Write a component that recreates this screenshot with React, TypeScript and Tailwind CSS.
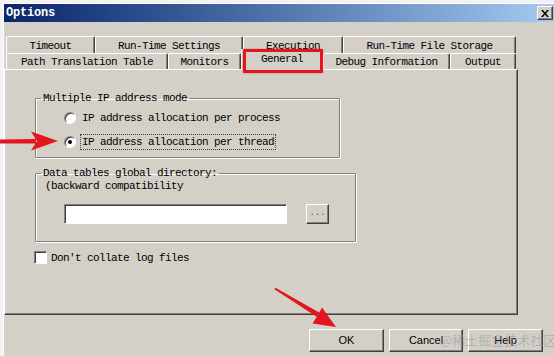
import clsx from 'clsx';

const MONO = "font-['Liberation_Mono',monospace] text-[11px] tracking-[-0.6px] leading-[12px] text-black";

interface TabInfo {
    label: string;
    width: string;
    active?: boolean;
}

const topRow: TabInfo[] = [
    { label: 'Timeout', width: 'w-[89px]' },
    { label: 'Run-Time Settings', width: 'w-[148px]' },
    { label: 'Execution', width: 'w-[100px]' },
    { label: 'Run-Time File Storage', width: 'w-[173px]' },
];

const bottomRow: TabInfo[] = [
    { label: 'Path Translation Table', width: 'w-[162px]' },
    { label: 'Monitors', width: 'w-[73px]' },
    { label: 'General', width: 'w-[82px]', active: true },
    { label: 'Debug Information', width: 'w-[127px]' },
    { label: 'Output', width: 'w-[66px]' },
];

function Tab({ tab }: { tab: TabInfo }) {
    if (tab.active) {
        return (
            <div className={clsx(tab.width, 'relative z-10 h-[21px] -mb-[1px] bg-[#d4d0c8] flex justify-center pt-[3px] rounded-t-[2px] border-t border-l border-r border-t-white border-l-white border-r-[#404040] shadow-[inset_-1px_0_0_#808080]', MONO)}>
                {tab.label}
                {/* marcação vermelha em volta da aba */}
                <div className="absolute left-[1px] -top-[1px] w-[80px] h-[24px] border-[3px] border-[#e3161d] rounded-[1px] shadow-[0_0_2px_rgba(200,0,0,0.5)]" />
            </div>
        );
    }
    return (
        <div className={clsx(tab.width, 'h-full flex items-center justify-center pt-[1px] rounded-t-[2px] border-t border-l border-r border-t-white border-l-white border-r-[#404040] shadow-[inset_-1px_0_0_#808080]', MONO)}>
            {tab.label}
        </div>
    );
}

function Radio({ checked }: { checked?: boolean }) {
    return (
        <div className="w-[12px] h-[12px] rounded-full bg-white border border-t-[#808080] border-l-[#808080] border-r-white border-b-white shadow-[inset_1px_1px_0_#404040] flex items-center justify-center">
            {checked && <div className="w-[4px] h-[4px] rounded-full bg-black" />}
        </div>
    );
}

function Button({ label, width }: { label: string; width: string }) {
    return (
        <button className={clsx(width, "h-[23px] bg-[#d4d0c8] border border-t-white border-l-white border-r-[#404040] border-b-[#404040] shadow-[inset_-1px_-1px_0_#808080] font-['Liberation_Sans',sans-serif] text-[11px] text-black flex items-center justify-center")}>
            {label}
        </button>
    );
}

export default function App() {
    return (
        <div className="relative w-[554px] h-[356px] overflow-hidden bg-[#f2f2f2] pt-[3px] pl-[3px]">
            <div className="h-full bg-[#d4d0c8] border-l border-t border-white">
                {/* barra de título */}
                <div className="h-[18px] flex items-center justify-between bg-gradient-to-r from-[#0a246a] to-[#a6caf0] pl-[2px] pr-[1px]">
                    <span className="font-['Liberation_Mono',monospace] text-[12px] font-bold tracking-[-0.2px] text-white">Options</span>
                    <div className="w-[16px] h-[14px] bg-[#d4d0c8] border border-t-white border-l-white border-r-[#404040] border-b-[#404040] shadow-[inset_-1px_-1px_0_#808080] flex items-center justify-center">
                        <svg width="8" height="7" viewBox="0 0 8 7">
                            <path d="M0 0h2l2 2.5L6 0h2L5 3.5 8 7H6L4 4.5 2 7H0l3-3.5z" fill="#000" />
                        </svg>
                    </div>
                </div>

                {/* abas */}
                <div className="mt-[14px] pl-[2px]">
                    <div className="flex h-[17px]">
                        {topRow.map(tab => <Tab key={tab.label} tab={tab} />)}
                    </div>
                    <div className="flex items-end h-[16px]">
                        {bottomRow.map(tab => <Tab key={tab.label} tab={tab} />)}
                    </div>
                </div>

                {/* painel */}
                <div className="w-[514px] h-[246px] border border-t-white border-l-white border-r-[#404040] border-b-[#404040] shadow-[inset_-1px_-1px_0_#808080] pl-[30px] pt-[22px]">
                    <fieldset className="w-[305px] border border-[#808080] shadow-[inset_1px_1px_0_#fff,1px_1px_0_#fff] rounded-[1px]">
                        <legend className={clsx('ml-[5px] px-[2px]', MONO)}>Multiple IP address mode</legend>
                        <div className="flex flex-col gap-[10px] pt-[7px] pb-[8px] pl-[28px]">
                            <div className="flex items-center h-[14px] gap-[5px]">
                                <Radio />
                                <span className={clsx(MONO, 'px-[1px]')}>IP address allocation per process</span>
                            </div>
                            <div className="flex items-center h-[14px] gap-[4px]">
                                <Radio checked />
                                <span className={clsx(MONO, 'px-[1px] py-[1px] border border-dotted border-[#404040]')}>IP address allocation per thread</span>
                            </div>
                        </div>
                    </fieldset>

                    <fieldset className="mt-[9px] w-[321px] border border-[#808080] shadow-[inset_1px_1px_0_#fff,1px_1px_0_#fff] rounded-[1px]">
                        <legend className={clsx('ml-[5px] px-[2px]', MONO)}>Data tables global directory:</legend>
                        <div className={clsx('pl-[9px] mt-[1px]', MONO)}>(backward compatibility</div>
                        <div className="flex items-center gap-[19px] pl-[28px] mt-[12px] pb-[17px]">
                            <div className="w-[223px] h-[20px] bg-white border border-t-[#808080] border-l-[#808080] border-r-white border-b-white shadow-[inset_1px_1px_0_#404040]" />
                            <div className={clsx('w-[23px] h-[20px] border border-t-white border-l-white border-r-[#404040] border-b-[#404040] shadow-[inset_-1px_-1px_0_#808080] flex items-center justify-center text-[#505050]', "font-['Liberation_Mono',monospace] text-[9px]")}>...</div>
                        </div>
                    </fieldset>

                    <div className="mt-[9px] -ml-[1px] flex items-center gap-[4px]">
                        <div className="w-[13px] h-[13px] bg-white border border-t-[#808080] border-l-[#808080] border-r-white border-b-white shadow-[inset_1px_1px_0_#404040]" />
                        <span className={MONO}>Don't collate log files</span>
                    </div>
                </div>

                {/* botões */}
                <div className="mt-[14px] flex justify-end gap-[5px] pr-[11px]">
                    <Button label="OK" width="w-[75px]" />
                    <Button label="Cancel" width="w-[74px]" />
                    <Button label="Help" width="w-[75px]" />
                </div>
            </div>

            {/* marca d'água */}
            <span className="absolute left-[440px] top-[332px] font-['Noto_Sans_CJK_SC',sans-serif] text-[13px] leading-[16px] text-[rgba(150,150,150,0.55)] whitespace-nowrap">@稀土掘金技术社区</span>

            {/* setas vermelhas */}
            <svg className="absolute inset-0 pointer-events-none" width="554" height="356" viewBox="0 0 554 356">
                <path d="M0 139.5 L36 139 L36 143.5 L0 143.5 Z" fill="#e3161d" />
                <path d="M31 131.5 L58 141 L31 150.5 L37 141 Z" fill="#e3161d" />
                <path d="M274 289 L276 288 L320 313 L317 317 Z" fill="#e3161d" />
                <path d="M322 307.5 L336 327 L312.5 323.5 L318 315 Z" fill="#e3161d" />
            </svg>
        </div>
    );
}
